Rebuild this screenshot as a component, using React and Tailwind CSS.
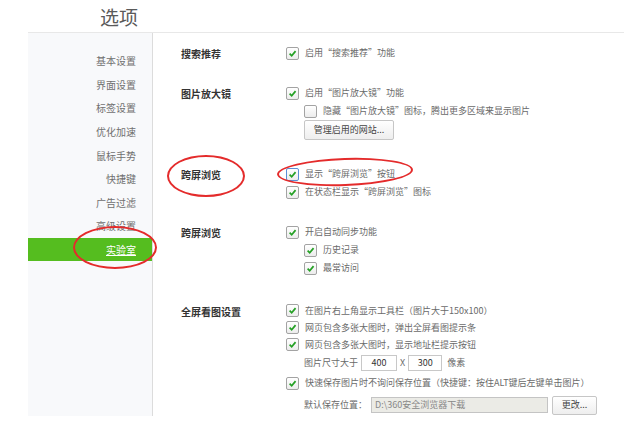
import React from 'react';

const Check = ({ checked = true, focus = false }) => (
  <span
    className={`w-[13px] h-[13px] shrink-0 rounded-[2px] border bg-linear-to-b from-white to-[#ececec] flex items-center justify-center ${
      focus ? 'border-[#5b8fd6]' : 'border-[#a3a3a3]'
    }`}
  >
    {checked && (
      <svg width="9" height="9" viewBox="0 0 10 10">
        <path d="M1.8 5.2 L4.1 7.6 L8.4 2.4" fill="none" stroke="#24a024" strokeWidth="1.9" />
      </svg>
    )}
  </span>
);

const Opt = ({ children, checked, focus, sub = false, h = 'h-[18px]' }) => (
  <div className={`flex items-center gap-[6px] ${h} ${sub ? 'pl-[18px]' : ''}`}>
    <Check checked={checked} focus={focus} />
    <span>{children}</span>
  </div>
);

const Section = ({ label, className = '', children }) => (
  <div className={`flex ${className}`}>
    <div className="w-[105px] shrink-0 h-[18px] flex items-center text-[10px] font-bold text-[#333]">{label}</div>
    <div className="flex flex-col">{children}</div>
  </div>
);

const navItems = ['基本设置', '界面设置', '标签设置', '优化加速', '鼠标手势', '快捷键', '广告过滤', '高级设置', '实验室'];

export default function App() {
  return (
    <div
      lang="zh-CN"
      className="relative w-[624px] h-[424px] bg-white overflow-hidden font-['Noto_Sans_CJK_SC','Liberation_Sans',sans-serif] text-[9px] text-[#6a6a6a]"
    >
      <div className="ml-[28px] flex flex-col">
        <div className="h-[33px] border-b border-[#e8e8e8] pl-[72px] flex items-center">
          <span className="text-[19px] text-[#5a5a5a] leading-none">选项</span>
        </div>
        <div className="flex h-[383px]">
          <div className="w-[125px] shrink-0 bg-[#f8f9fb] border-r border-[#dcdcdc] pt-[16px] flex flex-col">
            {navItems.map((n, i) => (
              <div
                key={n}
                className={`h-[23.6px] flex items-center justify-end pr-[16px] text-[10px] ${
                  i === 8 ? 'bg-[#55bd1f] text-white underline' : 'text-[#707070]'
                }`}
              >
                {n}
              </div>
            ))}
          </div>
          <div className="pl-[28px] pt-[11px] flex flex-col">
            <Section label="搜索推荐">
              <Opt>启用“搜索推荐”功能</Opt>
            </Section>
            <Section label="图片放大镜" className="mt-[22px]">
              <Opt>启用“图片放大镜”功能</Opt>
              <Opt sub checked={false}>隐藏“图片放大镜”图标，腾出更多区域来显示图片</Opt>
              <div className="pl-[18px]">
                <button className="h-[20px] w-[90px] border border-[#c6c6c6] rounded-[2px] bg-linear-to-b from-white to-[#eeeeee] text-[9px] text-[#444]">
                  管理启用的网站...
                </button>
              </div>
            </Section>
            <Section label="跨屏浏览" className="mt-[25px]">
              <Opt focus>显示“跨屏浏览”按钮</Opt>
              <Opt>在状态栏显示“跨屏浏览”图标</Opt>
            </Section>
            <Section label="跨屏浏览" className="mt-[22px]">
              <Opt>开启自动同步功能</Opt>
              <Opt sub>历史记录</Opt>
              <Opt sub>最常访问</Opt>
            </Section>
            <Section label="全屏看图设置" className="mt-[25px]">
              <Opt h="h-[17px]">在图片右上角显示工具栏（图片大于150x100）</Opt>
              <Opt h="h-[17px]">网页包含多张大图时，弹出全屏看图提示条</Opt>
              <Opt h="h-[17px]">网页包含多张大图时，显示地址栏提示按钮</Opt>
              <div className="h-[20px] flex items-center pl-[18px]">
                <span>图片尺寸大于</span>
                <span className="ml-[3px] w-[36px] h-[16px] border border-[#c8c8c8] bg-white flex items-center justify-center text-[#333]">400</span>
                <span className="mx-[3px]">X</span>
                <span className="w-[34px] h-[16px] border border-[#c8c8c8] bg-white flex items-center justify-center text-[#333]">300</span>
                <span className="ml-[5px]">像素</span>
              </div>
              <Opt h="h-[20px]">快速保存图片时不询问保存位置（快捷键：按住ALT键后左键单击图片）</Opt>
              <div className="h-[24px] flex items-center pl-[18px]">
                <span>默认保存位置：</span>
                <span className="ml-[4px] w-[177px] h-[16px] border border-[#c4c4c4] bg-[#ebebe6] flex items-center pl-[3px] text-[#888]">D:\360安全浏览器下载</span>
                <button className="ml-[4px] w-[45px] h-[19px] border border-[#c6c6c6] rounded-[2px] bg-linear-to-b from-white to-[#eeeeee] text-[9px] text-[#444]">
                  更改...
                </button>
              </div>
            </Section>
          </div>
        </div>
      </div>

      <div className="absolute left-[73px] top-[226px] w-[84px] h-[43px] rounded-[50%] border-2 border-[#e42b2b]" />
      <div className="absolute left-[167px] top-[155px] w-[78px] h-[42px] rounded-[50%] border-2 border-[#e42b2b]" />
      <div className="absolute left-[277px] top-[158px] w-[136px] h-[28px] rounded-[50%] border-2 border-[#e42b2b] -rotate-2" />
    </div>
  );
}
